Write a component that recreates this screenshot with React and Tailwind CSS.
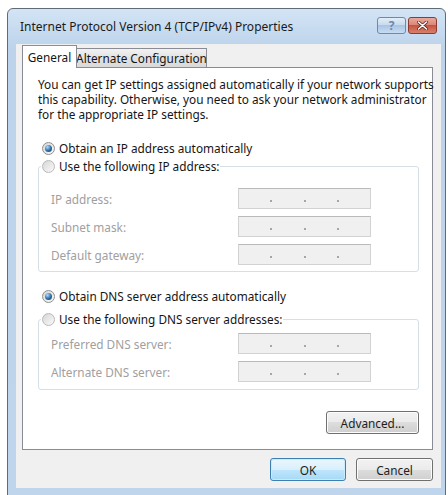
import React from 'react';

const font = "font-['Noto_Sans',sans-serif]";

function Radio({ checked, disabled }) {
  return (
    <span
      className={`inline-flex h-[13px] w-[13px] shrink-0 items-center justify-center rounded-full border ${
        disabled ? 'border-[#b9b9b9]' : 'border-[#8e8f8f]'
      } bg-[linear-gradient(135deg,#d6d6d6,#fafafa)]`}
    >
      {checked && (
        <span className="h-[7px] w-[7px] rounded-full bg-[radial-gradient(circle_at_35%_30%,#b5dbf7,#2b6aa3_55%,#173f66)]" />
      )}
    </span>
  );
}

function IpBox() {
  return (
    <div className="flex h-[21px] w-[133px] items-center justify-evenly border border-[#d2d2d2] border-t-[#bababa] bg-[#f0f0f0]">
      <span className="mt-[5px] h-[2px] w-[2px] bg-[#a6a6a6]" />
      <span className="mt-[5px] h-[2px] w-[2px] bg-[#a6a6a6]" />
      <span className="mt-[5px] h-[2px] w-[2px] bg-[#a6a6a6]" />
    </div>
  );
}

function Row({ label }) {
  return (
    <div className="flex items-center justify-between pr-[47px]">
      <span className="text-[#a0a0a0]">{label}</span>
      <IpBox />
    </div>
  );
}

function Group({ title, rows, pt, pb }) {
  return (
    <fieldset
      className={`ml-[15px] w-[381px] rounded-[3px] border border-[#d5dfe5] pl-[12px] ${pt} ${pb}`}
    >
      <legend className="-ml-[10px] flex h-[16px] items-center gap-[4px] px-[1px]">
        <Radio disabled />
        <span>{title}</span>
      </legend>
      <div className="flex flex-col gap-[7px]">
        {rows.map((r) => (
          <Row key={r} label={r} />
        ))}
      </div>
    </fieldset>
  );
}

function Button({ children, primary, className = '' }) {
  return (
    <button
      className={`flex h-[23px] items-center justify-center rounded-[3px] border ${
        primary
          ? 'border-[#3c7fb1] bg-[linear-gradient(#eaf6fd_0%,#d9f0fc_50%,#bee6fd_50%,#a7d9f5_100%)] shadow-[inset_0_0_0_1px_#c8ecfd]'
          : 'border-[#707070] bg-[linear-gradient(#f2f2f2_0%,#ebebeb_50%,#dddddd_50%,#cfcfcf_100%)] shadow-[inset_0_0_0_1px_#fcfcfc]'
      } text-[#1e1e1e] ${className}`}
    >
      {children}
    </button>
  );
}

export default function App() {
  return (
    <div className={`h-[495px] w-[448px] overflow-hidden bg-white pl-[7px] pt-[8px] text-[11.8px] leading-[16px] text-[#151515] ${font}`}>
      <div className="h-[500px] w-[439px] rounded-t-[6px] border border-[#5f6b78] bg-[linear-gradient(#d3e4f5,#bcd3eb_40px,#bfd5ec)] pl-[8px] pr-[4px]">
        {/* title bar */}
        <div className="flex h-[35px] items-center justify-between">
          <span className="pl-[4px] pt-[1px] text-[12px] text-[#1a1a1a]">
            Internet Protocol Version 4 (TCP/IPv4) Properties
          </span>
          <div className="-mt-[2px] mr-[4px] flex gap-[2px]">
            <div className="flex h-[17px] w-[29px] items-center justify-center rounded-[3px] border border-[#6d89ad] bg-[linear-gradient(#e2edf8,#c6d9ee_50%,#a9c4e4_50%,#c8dcf2)] text-[12px] font-bold leading-none text-[#7088a8]">
              ?
            </div>
            <div className="flex h-[17px] w-[29px] items-center justify-center rounded-[3px] border border-[#8d3b31] bg-[linear-gradient(#eaa99d,#d98474_50%,#c7543f_50%,#d8806c)]">
              <svg width="11" height="9" viewBox="0 0 11 9">
                <path d="M1.5 1 L9.5 8 M9.5 1 L1.5 8" stroke="#5a2a24" strokeWidth="3" strokeLinecap="round" />
                <path d="M1.5 1 L9.5 8 M9.5 1 L1.5 8" stroke="#ffffff" strokeWidth="1.6" strokeLinecap="round" />
              </svg>
            </div>
          </div>
        </div>

        {/* client area */}
        <div className="h-[444px] bg-[#f0f0f0] pl-[6px] pr-[8px] pt-[1px]">
          <div className="flex items-end">
            <div className="relative z-10 -mb-px flex h-[23px] w-[55px] items-center justify-center border border-b-0 border-[#898c95] bg-white">
              General
            </div>
            <div className="flex h-[19px] w-[130px] items-center justify-center whitespace-nowrap border border-b-0 border-l-0 border-[#898c95] bg-[linear-gradient(#f2f2f2,#e3e3e3_50%,#d9d9d9)]">
              Alternate Configuration
            </div>
          </div>

          <div className="h-[383px] border border-[#898c95] bg-white">
            <p className="ml-[15px] mt-[9px] whitespace-nowrap leading-[15px]">
              You can get IP settings assigned automatically if your network supports
              <br />
              this capability. Otherwise, you need to ask your network administrator
              <br />
              for the appropriate IP settings.
            </p>

            <div className="ml-[19px] mt-[18px] flex h-[16px] items-center gap-[4px]">
              <Radio checked />
              <span>Obtain an IP address automatically</span>
            </div>

            <div className="mt-[2px]">
              <Group
                title="Use the following IP address:"
                rows={['IP address:', 'Subnet mask:', 'Default gateway:']}
                pt="pt-[14px]"
                pb="pb-[6px]"
              />
            </div>

            <div className="ml-[19px] mt-[16px] flex h-[16px] items-center gap-[4px]">
              <Radio checked />
              <span>Obtain DNS server address automatically</span>
            </div>

            <div className="mt-[7px]">
              <Group
                title="Use the following DNS server addresses:"
                rows={['Preferred DNS server:', 'Alternate DNS server:']}
                pt="pt-[6px]"
                pb="pb-[7px]"
              />
            </div>

            <div className="mr-[13px] mt-[21px] flex justify-end">
              <Button className="h-[22px] w-[93px]">Advanced...</Button>
            </div>
          </div>

          <div className="mt-[8px] flex justify-end gap-[10px]">
            <Button primary className="w-[76px]">
              OK
            </Button>
            <Button className="w-[77px]">Cancel</Button>
          </div>
        </div>
      </div>
    </div>
  );
}
